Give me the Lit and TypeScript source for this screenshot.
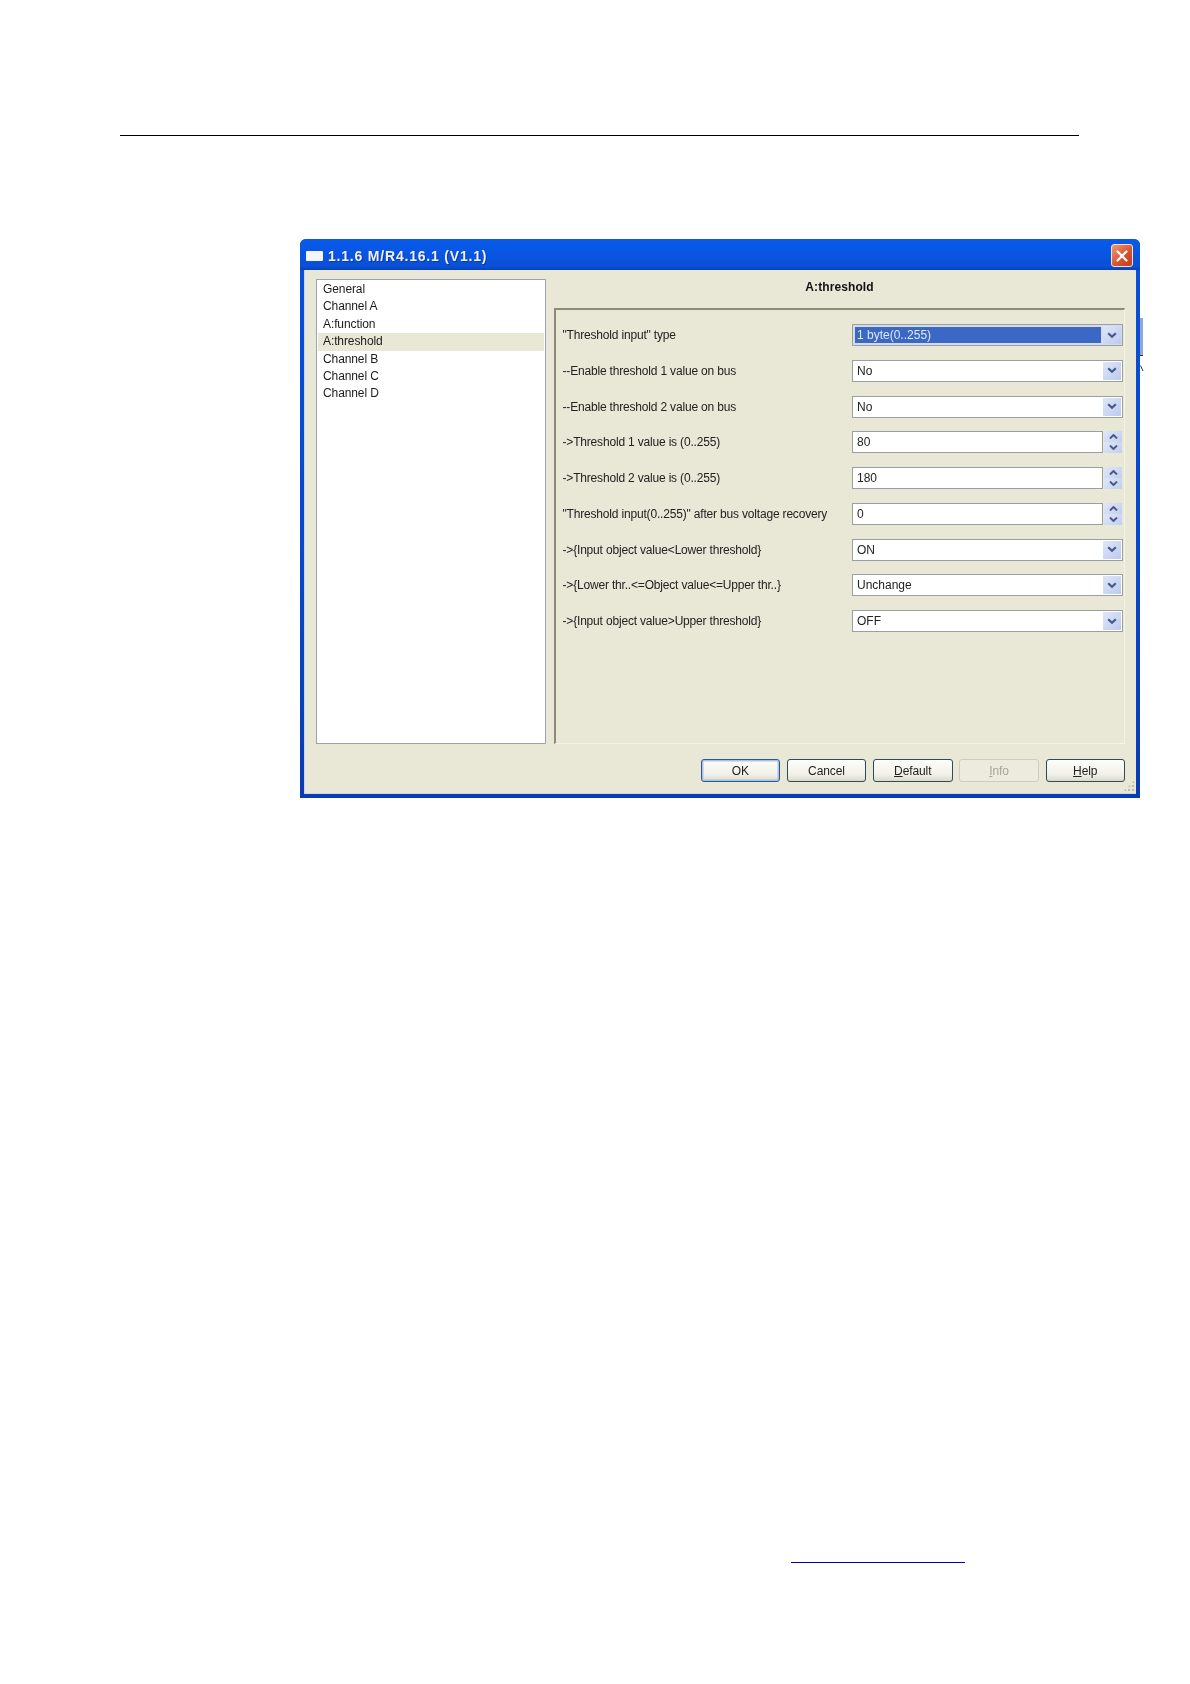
import { LitElement, html, css } from "lit";
import { customElement } from "lit/decorators.js";

type Row = { label: string; value: string; kind: "select" | "spin"; active?: boolean };

const ROWS: Row[] = [
  { label: '"Threshold input" type', value: "1 byte(0..255)", kind: "select", active: true },
  { label: "--Enable threshold 1 value on bus", value: "No", kind: "select" },
  { label: "--Enable threshold 2 value on bus", value: "No", kind: "select" },
  { label: "->Threshold 1 value is (0..255)", value: "80", kind: "spin" },
  { label: "->Threshold 2 value is (0..255)", value: "180", kind: "spin" },
  { label: '"Threshold input(0..255)" after bus voltage recovery', value: "0", kind: "spin" },
  { label: "->{Input object value<Lower threshold}", value: "ON", kind: "select" },
  { label: "->{Lower thr..<=Object value<=Upper thr..}", value: "Unchange", kind: "select" },
  { label: "->{Input object value>Upper threshold}", value: "OFF", kind: "select" },
];

const NAV = ["General", "Channel A", "A:function", "A:threshold", "Channel B", "Channel C", "Channel D"];

@customElement("app-root")
export class AppRoot extends LitElement {
  static styles = css`
    :host {
      display: block;
      width: 1190px;
      height: 1684px;
      background: #fff;
      overflow: hidden;
      font-family: "Liberation Sans", Arial, sans-serif;
      font-size: 12px;
      color: #1c1c1c;
    }
    .page { display: flex; flex-direction: column; padding-top: 135px; }
    .rule { height: 1px; background: #000; margin: 0 111px 0 120px; }
    .dialog {
      width: 840px; height: 559px; margin: 103px 0 0 300px;
      box-sizing: border-box; background: linear-gradient(#0a50d8, #0a46c8 60%, #0a3cb4);
      border-radius: 6px 6px 0 0; display: flex; flex-direction: column;
      padding: 0 4px 4px 4px; position: relative; filter: blur(0.35px);
    }
    .titlebar {
      height: 31px; flex: none; display: flex; align-items: center; box-sizing: border-box;
      background: linear-gradient(#0a5ae6, #0858e8 30%, #0a4fd6 90%, #0840b8);
      margin: 0 -4px; padding: 3px 7px 0 6px;
      border-radius: 6px 6px 0 0; gap: 5px;
    }
    .winicon { width: 17px; height: 10px; background: #f4f6fb; border-radius: 1px; margin-top: -1px; }
    .wintitle {
      flex: 1; color: #eef1f8; font-weight: 700; font-size: 14px; letter-spacing: 0.8px;
      text-shadow: 1px 1px 0 #0a3aa0;
    }
    .close {
      width: 22px; height: 23px; box-sizing: border-box; border: 1px solid #f0e0d8; border-radius: 3px;
      background: linear-gradient(135deg, #ee9a78, #d9502a 60%, #c23c18);
      display: flex; align-items: center; justify-content: center; margin-top: -1px;
    }
    .body {
      flex: 1; background: #e9e7d6; display: flex; flex-direction: column;
      border-left: 1px solid #cdd6e8; border-bottom: 1px solid #cdd6e8;
      padding: 9px 11px 0 11px; min-height: 0; position: relative;
    }
    .main { display: flex; gap: 8px; height: 465px; flex: none; }
    .list {
      width: 230px; flex: none; box-sizing: border-box; background: #fff;
      border: 1px solid #9aa4ad; padding: 1px; display: flex; flex-direction: column;
    }
    .item { height: 17.4px; line-height: 17.4px; padding-left: 5px; font-size: 12px; letter-spacing: -0.1px; }
    .item.sel { background: #e9e7d6; }
    .pane { flex: 1; display: flex; flex-direction: column; }
    .panetitle {
      height: 16px; padding-bottom: 13px; flex: none; display: flex; align-items: center; justify-content: center;
      font-weight: 700; font-size: 12px; color: #111; letter-spacing: 0.1px;
    }
    .panel {
      flex: 1; box-sizing: border-box;
      border-top: 2px solid #8d8a78; border-left: 2px solid #8d8a78;
      border-right: 1px solid #f4f3e8; border-bottom: 1px solid #f4f3e8;
      padding: 14px 1px 0 6.5px; display: flex; flex-direction: column; gap: 13.75px;
    }
    .row { display: flex; align-items: center; height: 22px; }
    .lbl { width: 289.5px; flex: none; font-size: 12px; letter-spacing: -0.18px; color: #222; white-space: nowrap; }
    .ctrl { flex: 1; display: flex; height: 22px; min-width: 0; }
    .box {
      flex: 1; box-sizing: border-box; height: 22px; background: #fff;
      border: 1px solid #9a9f9f; display: flex; align-items: stretch;
      padding: 0 1px 0 0; font-size: 12px; color: #222; min-width: 0;
    }
    .val { flex: 1; display: flex; align-items: center; margin: 2px 2px; padding-left: 2px; }
    .active .box { background: #d4dcec; }
    .active .val { background: #3a68c4; color: #dfe8f8; }
    .drop {
      width: 18px; margin: 1px 0; flex: none; background: linear-gradient(135deg, #dfe6f7, #bccaee);
      display: flex; align-items: center; justify-content: center;
    }
    .spin { width: 20px; flex: none; display: flex; flex-direction: column; padding: 0 1px 0 1px; box-sizing: border-box; }
    .sb {
      flex: 1; background: linear-gradient(135deg, #dfe6f7, #c3cfee);
      display: flex; align-items: center; justify-content: center;
    }
    .buttons { display: flex; gap: 6.75px; justify-content: flex-end; margin-top: 15px; }
    .btn {
      width: 79.5px; height: 23px; box-sizing: border-box; border: 1px solid #2f4a5c; border-radius: 3px;
      background: linear-gradient(#fdfdfa, #f1f0e8 70%, #dcd9cb);
      display: flex; align-items: center; justify-content: center; font-size: 12px; color: #222;
      letter-spacing: -0.1px;
    }
    .btn.def { border-color: #2c5a8c; box-shadow: inset 0 0 0 1.5px #a9c2e6; }
    .btn.off { border-color: #cfcdbd; background: #edebdd; color: #a8a698; }
    .btn u { text-underline-offset: 1px; }
    .grip {
      position: absolute; right: 1px; bottom: 1px; width: 12px; height: 12px;
      background-image: radial-gradient(#bdbaa8 1px, transparent 1.2px);
      background-size: 4px 4px;
      clip-path: polygon(100% 0, 100% 100%, 0 100%);
    }
    .peek { position: absolute; left: 100%; top: 79px; width: 3px; height: 37px; background: #8fa8d8; border-bottom: 1px solid #333; }
    .mark { position: absolute; left: 100%; top: 126px; display: flex; }
    .link { height: 1px; width: 174px; background: #0000a8; margin: 764px 0 0 791px; }
  `;

  private chevron() {
    return html`<svg width="10" height="7" viewBox="0 0 10 7"><path d="M1.2 1.2 5 4.8 8.8 1.2" fill="none" stroke="#44598a" stroke-width="2.2"/></svg>`;
  }

  private arrow(up: boolean) {
    return html`<svg width="9" height="5" viewBox="0 0 9 5"><path d="${up ? "M1 4.5 4.5 1 8 4.5" : "M1 .5 4.5 4 8 .5"}" fill="none" stroke="#44598a" stroke-width="1.9"/></svg>`;
  }

  private control(r: Row) {
    if (r.kind === "select") {
      return html`<div class="ctrl ${r.active ? "active" : ""}">
        <div class="box"><span class="val">${r.value}</span><span class="drop">${this.chevron()}</span></div>
      </div>`;
    }
    return html`<div class="ctrl">
      <div class="box"><span class="val">${r.value}</span></div>
      <div class="spin">
        <span class="sb">${this.arrow(true)}</span>
        <span class="sb">${this.arrow(false)}</span>
      </div>
    </div>`;
  }

  render() {
    return html`<div class="page">
      <div class="rule"></div>
      <div class="dialog">
        <div class="titlebar">
          <span class="winicon"></span>
          <span class="wintitle">1.1.6 M/R4.16.1 (V1.1)</span>
          <span class="close"><svg width="14" height="14" viewBox="0 0 14 14"><path d="M2.5 2.5 11.5 11.5M11.5 2.5 2.5 11.5" stroke="#fff" stroke-width="2.2" stroke-linecap="round"/></svg></span>
        </div>
        <div class="body">
          <div class="main">
            <div class="list">
              ${NAV.map((n) => html`<div class="item ${n === "A:threshold" ? "sel" : ""}">${n}</div>`)}
            </div>
            <div class="pane">
              <div class="panetitle">A:threshold</div>
              <div class="panel">
                ${ROWS.map((r) => html`<div class="row"><span class="lbl">${r.label}</span>${this.control(r)}</div>`)}
              </div>
            </div>
          </div>
          <div class="buttons">
            <span class="btn def">OK</span>
            <span class="btn">Cancel</span>
            <span class="btn"><span><u>D</u>efault</span></span>
            <span class="btn off"><span><u>I</u>nfo</span></span>
            <span class="btn"><span><u>H</u>elp</span></span>
          </div>
          <span class="grip"></span>
        </div>
        <span class="peek"></span>
        <span class="mark"><svg width="4" height="7" viewBox="0 0 4 7"><path d="M0.5 0.5 3 6" fill="none" stroke="#333" stroke-width="1"/></svg></span>
      </div>
      <div class="link"></div>
    </div>`;
  }
}
